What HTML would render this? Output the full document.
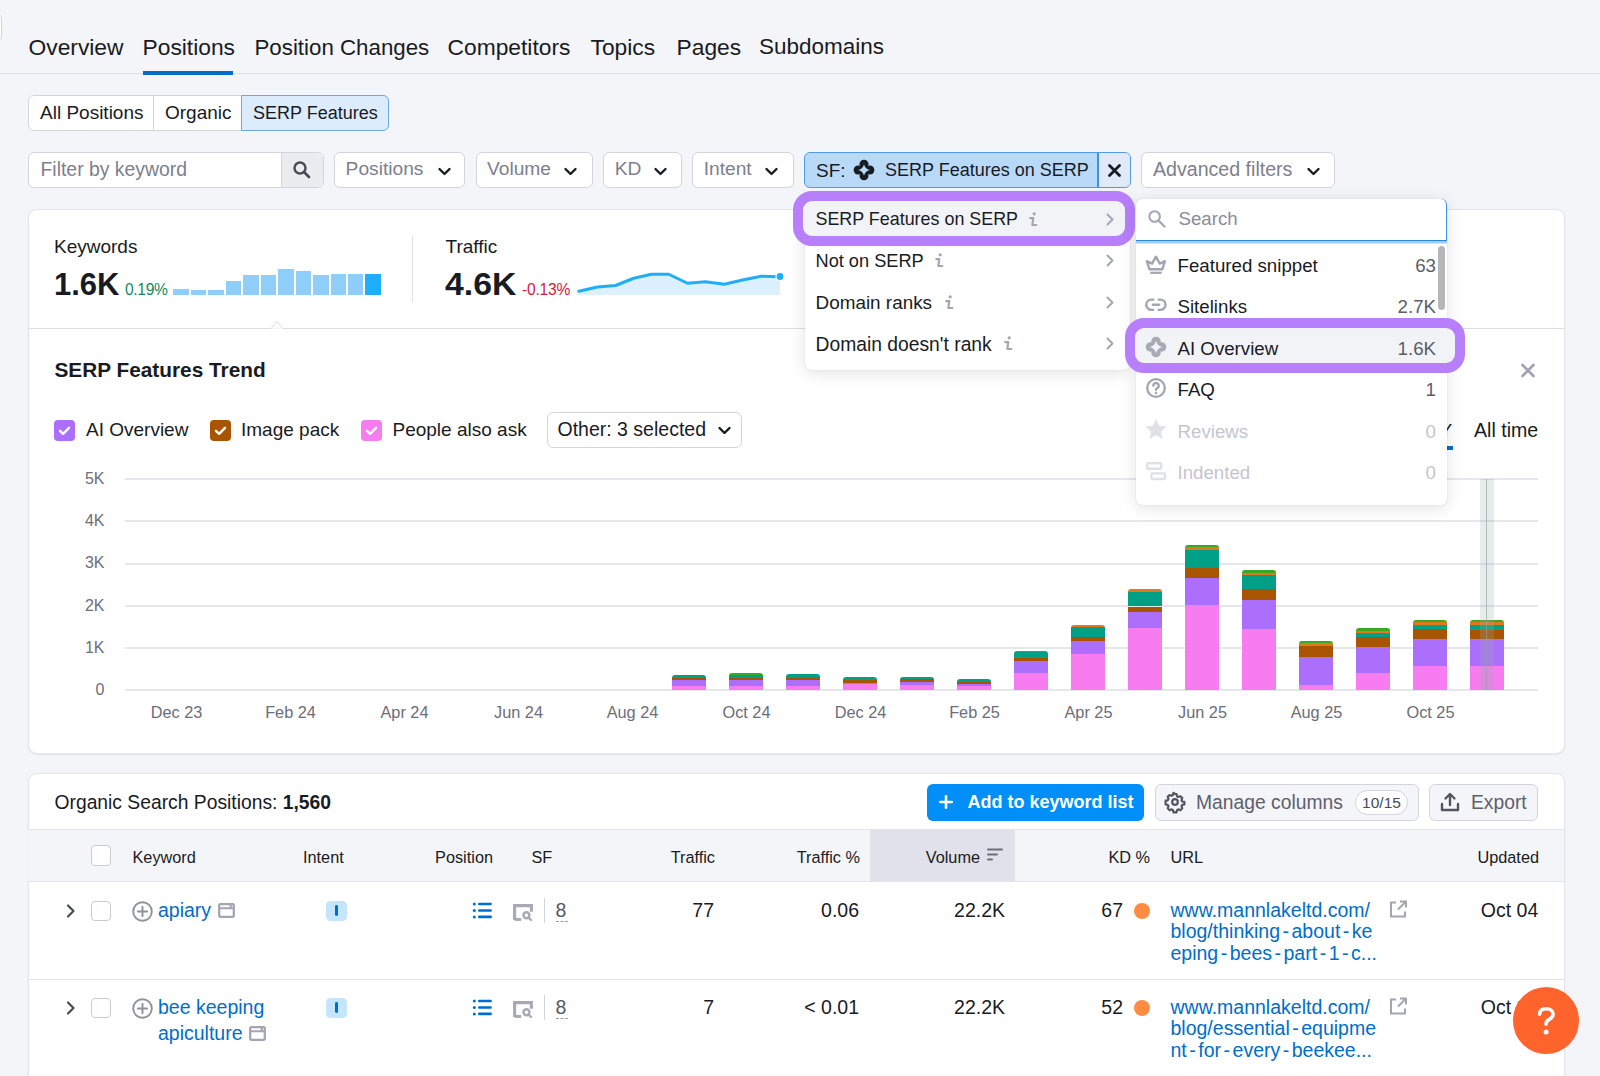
<!DOCTYPE html>
<html><head><meta charset="utf-8">
<style>
*{box-sizing:border-box;margin:0;padding:0}
html,body{width:1600px;height:1076px;overflow:hidden;background:#f4f5f9;font-family:"Liberation Sans",sans-serif;color:#191b23;position:relative}
.a{position:absolute}
.t{position:absolute;white-space:nowrap;line-height:1}
.card{position:absolute;background:#fff;border:1px solid #e3e4ea;border-radius:9px;box-shadow:0 1px 2px rgba(25,27,35,0.07)}
.dd{position:absolute;top:152px;height:36px;background:#fff;border:1px solid #d3d5dd;border-radius:6px}
.ph{color:#7d808c}
svg{position:absolute;overflow:visible}
.kwi{display:inline-block;width:17px;height:15px;border:1.8px solid #a3a5b1;border-radius:2px;vertical-align:-1px;margin-left:2px;position:relative}
.kwi:after{content:"";position:absolute;left:0;right:0;top:4px;border-top:1.8px solid #a3a5b1}
.kwi:before{content:"";position:absolute;left:6.5px;top:4px;width:0;height:8px;border-left:1.8px solid #a3a5b1}
</style></head><body>

<!-- top-left clipped element -->
<div class="a" style="left:-30px;top:13px;width:32px;height:29px;border:1px solid #d3d5dd;border-radius:6px;background:#fff"></div>

<!-- tabs -->
<div class="t" style="left:28.5px;top:36.2px;font-size:22.8px">Overview</div>
<div class="t" style="left:142.5px;top:36.2px;font-size:22.8px">Positions</div>
<div class="t" style="left:254.5px;top:36.6px;font-size:22.3px">Position Changes</div>
<div class="t" style="left:447.5px;top:36.2px;font-size:22.8px">Competitors</div>
<div class="t" style="left:590.5px;top:36.2px;font-size:22.8px">Topics</div>
<div class="t" style="left:676.5px;top:36.2px;font-size:22.8px">Pages</div>
<div class="t" style="left:759px;top:36.4px;font-size:22.5px">Subdomains</div>
<div class="a" style="left:0;top:73px;width:1600px;height:1px;background:#dcdee5"></div>
<div class="a" style="left:143px;top:71px;width:90px;height:4px;background:#006dca"></div>

<!-- segmented control -->
<div class="a" style="left:28px;top:95.3px;width:361px;height:35.4px;border:1px solid #d3d5dd;border-radius:6px;background:#fff"></div>
<div class="a" style="left:153px;top:96px;width:1px;height:34px;background:#d3d5dd"></div>
<div class="a" style="left:241px;top:95.3px;width:148px;height:35.4px;border:1px solid #6aa9e6;border-radius:0 6px 6px 0;background:#dcecfd"></div>
<div class="t" style="left:40px;top:103px;font-size:19px">All Positions</div>
<div class="t" style="left:165px;top:103px;font-size:19px">Organic</div>
<div class="t" style="left:253px;top:104px;font-size:18px">SERP Features</div>

<!-- filter row -->
<div class="dd" style="left:28px;width:296px"></div>
<div class="a" style="left:281px;top:153px;width:42px;height:34px;background:#ebecf0;border-left:1px solid #d3d5dd;border-radius:0 5px 5px 0"></div>
<svg style="left:292px;top:160px" width="20" height="20" viewBox="0 0 20 20"><circle cx="8" cy="8" r="5.5" fill="none" stroke="#484a54" stroke-width="2.4"/><path d="M12 12l5 5" stroke="#484a54" stroke-width="2.6" stroke-linecap="round"/></svg>
<div class="t ph" style="left:40.5px;top:160px;font-size:19.4px">Filter by keyword</div>

<div class="dd" style="left:334px;width:131px"></div>
<div class="t ph" style="left:345.6px;top:159px;font-size:19.2px">Positions</div>
<div class="dd" style="left:475.6px;width:117px"></div>
<div class="t ph" style="left:487px;top:159px;font-size:19.2px">Volume</div>
<div class="dd" style="left:603.4px;width:78.5px"></div>
<div class="t ph" style="left:614.7px;top:159px;font-size:19.2px">KD</div>
<div class="dd" style="left:692px;width:102px"></div>
<div class="t ph" style="left:703.7px;top:159px;font-size:19.2px">Intent</div>
<div class="dd" style="left:1141px;width:193.5px"></div>
<div class="t ph" style="left:1153px;top:159.5px;font-size:19.6px">Advanced filters</div>

<svg style="left:438px;top:167px" width="13" height="9" viewBox="0 0 13 9"><path d="M1.5 2l5 5 5-5" fill="none" stroke="#191b23" stroke-width="2.4" stroke-linecap="round" stroke-linejoin="round"/></svg>
<svg style="left:564px;top:167px" width="13" height="9" viewBox="0 0 13 9"><path d="M1.5 2l5 5 5-5" fill="none" stroke="#191b23" stroke-width="2.4" stroke-linecap="round" stroke-linejoin="round"/></svg>
<svg style="left:654px;top:167px" width="13" height="9" viewBox="0 0 13 9"><path d="M1.5 2l5 5 5-5" fill="none" stroke="#191b23" stroke-width="2.4" stroke-linecap="round" stroke-linejoin="round"/></svg>
<svg style="left:765px;top:167px" width="13" height="9" viewBox="0 0 13 9"><path d="M1.5 2l5 5 5-5" fill="none" stroke="#191b23" stroke-width="2.4" stroke-linecap="round" stroke-linejoin="round"/></svg>
<svg style="left:1307px;top:167px" width="13" height="9" viewBox="0 0 13 9"><path d="M1.5 2l5 5 5-5" fill="none" stroke="#191b23" stroke-width="2.4" stroke-linecap="round" stroke-linejoin="round"/></svg>


<!-- SF chip -->
<div class="a" style="left:804px;top:152px;width:327px;height:36px;border:1px solid #4f9de6;border-radius:6px;background:#b9d9f8;overflow:hidden">
  <div class="a" style="left:292px;top:0;width:34px;height:34px;background:#dfe9f8;border-left:2px solid #3f91e3"></div>
</div>
<div class="t" style="left:816px;top:160.5px;font-size:19px">SF:</div>
<svg style="left:853.6px;top:160px" width="20" height="20" viewBox="0 0 20 20"><circle cx="10.00" cy="4.15" r="4.5" fill="#191b23"/><circle cx="15.85" cy="10.00" r="4.5" fill="#191b23"/><circle cx="10.00" cy="15.85" r="4.5" fill="#191b23"/><circle cx="4.15" cy="10.00" r="4.5" fill="#191b23"/><path d="M10 4.2 Q11.0 9.0 15.8 10 Q11.0 11.0 10 15.8 Q9.0 11.0 4.2 10 Q9.0 9.0 10 4.2Z" fill="#b9d9f8"/></svg>
<div class="t" style="left:885px;top:160.5px;font-size:18px">SERP Features on SERP</div>
<svg style="left:1107.5px;top:163.5px" width="13" height="13" viewBox="0 0 13 13"><path d="M1.5 1.5l10 10M11.5 1.5l-10 10" stroke="#191b23" stroke-width="2.8" stroke-linecap="round"/></svg>
<!-- CARD1 -->
<div class="card" style="left:27.5px;top:208.5px;width:1537px;height:545px"></div>


<div class="t" style="left:54px;top:237px;font-size:19px">Keywords</div>
<div class="t" style="left:54px;top:268.5px;font-size:31px;font-weight:700">1.6K</div>
<div class="t" style="left:125px;top:282px;font-size:15.6px;letter-spacing:-0.35px;color:#0e8a63">0.19%</div>
<div class="a" style="left:173.4px;top:288.7px;width:15.6px;height:6.5px;background:#8fcefb"></div>
<div class="a" style="left:190.8px;top:289.6px;width:15.6px;height:5.6px;background:#8fcefb"></div>
<div class="a" style="left:208.3px;top:289.6px;width:15.6px;height:5.6px;background:#8fcefb"></div>
<div class="a" style="left:225.9px;top:280.6px;width:15.6px;height:14.6px;background:#8fcefb"></div>
<div class="a" style="left:243.2px;top:275.2px;width:15.6px;height:20.0px;background:#8fcefb"></div>
<div class="a" style="left:260.7px;top:274.5px;width:15.6px;height:20.7px;background:#8fcefb"></div>
<div class="a" style="left:278.0px;top:269.3px;width:15.6px;height:25.9px;background:#8fcefb"></div>
<div class="a" style="left:295.6px;top:270.7px;width:15.6px;height:24.5px;background:#8fcefb"></div>
<div class="a" style="left:313.0px;top:274.5px;width:15.6px;height:20.7px;background:#8fcefb"></div>
<div class="a" style="left:330.5px;top:273.6px;width:15.6px;height:21.6px;background:#8fcefb"></div>
<div class="a" style="left:347.8px;top:273.6px;width:15.6px;height:21.6px;background:#8fcefb"></div>
<div class="a" style="left:365.4px;top:273.6px;width:15.6px;height:21.6px;background:#1eaefb"></div>

<div class="a" style="left:412px;top:235px;width:1px;height:67px;background:#e0e1e9"></div>
<div class="t" style="left:445.5px;top:237px;font-size:19px">Traffic</div>
<div class="t" style="left:445px;top:268.5px;font-size:31px;font-weight:700;transform:scaleX(1.09);transform-origin:0 0">4.6K</div>
<div class="t" style="left:522px;top:282px;font-size:15.6px;letter-spacing:-0.2px;color:#d6173b">-0.13%</div>
<svg style="left:0;top:0" width="1600" height="400"><path d="M578.75,295 L578.75,291.25 L597.50,287.00 L615.50,285.50 L633.75,278.25 L651.25,274.25 L668.75,274.25 L687.50,283.25 L705.50,281.75 L724.25,284.25 L742.50,280.00 L761.25,276.25 L780.00,276.75 L780,295 Z" fill="#ddf0fd"/><polyline points="578.75,291.25 597.50,287.00 615.50,285.50 633.75,278.25 651.25,274.25 668.75,274.25 687.50,283.25 705.50,281.75 724.25,284.25 742.50,280.00 761.25,276.25 780.00,276.75" fill="none" stroke="#1eaefb" stroke-width="3" stroke-linejoin="round" stroke-linecap="round"/><circle cx="780" cy="276.5" r="4" fill="#1eaefb" stroke="#fff" stroke-width="1.2"/></svg>
<div class="a" style="left:28px;top:328px;width:1536px;height:1px;background:#dcdee5"></div>
<svg style="left:268px;top:318px" width="20" height="12" viewBox="0 0 20 12"><path d="M0 10.5 L3 10.5 L9 3.5 L15 10.5 L20 10.5" fill="#fff" stroke="#dcdee5" stroke-width="1"/><rect x="3.5" y="10.6" width="11" height="2" fill="#fff"/></svg>


<div class="t" style="left:54.5px;top:360px;font-size:20.8px;font-weight:700">SERP Features Trend</div>
<svg style="left:1521px;top:364px" width="14" height="13" viewBox="0 0 14 13"><path d="M1.5 1l11 11M12.5 1l-11 11" stroke="#a3a5b1" stroke-width="2.8" stroke-linecap="round"/></svg>
<div class="a" style="left:54px;top:420px"><svg width="21" height="21" viewBox="0 0 21 21" style="position:static;display:block"><rect width="21" height="21" rx="4" fill="#ab6ffc"/><path d="M6 10.8l3.1 3 5.9-6" fill="none" stroke="#fff" stroke-width="2.4" stroke-linecap="round" stroke-linejoin="round"/></svg></div>
<div class="t" style="left:86px;top:419.5px;font-size:19px">AI Overview</div>
<div class="a" style="left:210px;top:420px"><svg width="21" height="21" viewBox="0 0 21 21" style="position:static;display:block"><rect width="21" height="21" rx="4" fill="#a95400"/><path d="M6 10.8l3.1 3 5.9-6" fill="none" stroke="#fff" stroke-width="2.4" stroke-linecap="round" stroke-linejoin="round"/></svg></div>
<div class="t" style="left:241px;top:419.5px;font-size:19px">Image pack</div>
<div class="a" style="left:360.6px;top:420px"><svg width="21" height="21" viewBox="0 0 21 21" style="position:static;display:block"><rect width="21" height="21" rx="4" fill="#f67cf0"/><path d="M6 10.8l3.1 3 5.9-6" fill="none" stroke="#fff" stroke-width="2.4" stroke-linecap="round" stroke-linejoin="round"/></svg></div>
<div class="t" style="left:392.5px;top:419.5px;font-size:19px">People also ask</div>
<div class="a" style="left:546.8px;top:412.3px;width:195.5px;height:35.3px;border:1px solid #d3d5dd;border-radius:6px;background:#fff"></div>
<div class="t" style="left:557.5px;top:420px;font-size:19.5px">Other: 3 selected</div>
<svg style="left:717.5px;top:425.5px" width="13" height="9" viewBox="0 0 13 9"><path d="M1.5 2l5 5 5-5" fill="none" stroke="#191b23" stroke-width="2.4" stroke-linecap="round" stroke-linejoin="round"/></svg>
<div class="t" style="left:1474px;top:420.5px;font-size:19.6px">All time</div>
<div class="t" style="left:1429px;top:420.5px;font-size:19px">1Y</div>
<div class="a" style="left:1420px;top:446px;width:33px;height:3.5px;background:#006dca"></div>
<div class="a" style="left:125px;top:478px;width:1413px;height:1.6px;background:#e6e7ed"></div>
<div class="a" style="left:125px;top:520px;width:1413px;height:1.6px;background:#e6e7ed"></div>
<div class="a" style="left:125px;top:563px;width:1413px;height:1.6px;background:#e6e7ed"></div>
<div class="a" style="left:125px;top:605px;width:1413px;height:1.6px;background:#e6e7ed"></div>
<div class="a" style="left:125px;top:647px;width:1413px;height:1.6px;background:#e6e7ed"></div>
<div class="a" style="left:125px;top:689px;width:1413px;height:1.6px;background:#e6e7ed"></div>
<div class="t" style="left:0;width:104.5px;text-align:right;top:470.7px;font-size:16px;color:#6c6e79">5K</div>
<div class="t" style="left:0;width:104.5px;text-align:right;top:512.9px;font-size:16px;color:#6c6e79">4K</div>
<div class="t" style="left:0;width:104.5px;text-align:right;top:555.3px;font-size:16px;color:#6c6e79">3K</div>
<div class="t" style="left:0;width:104.5px;text-align:right;top:597.5px;font-size:16px;color:#6c6e79">2K</div>
<div class="t" style="left:0;width:104.5px;text-align:right;top:639.7px;font-size:16px;color:#6c6e79">1K</div>
<div class="t" style="left:0;width:104.5px;text-align:right;top:681.7px;font-size:16px;color:#6c6e79">0</div>
<div class="t" style="left:126.5px;width:100px;text-align:center;top:704.2px;font-size:16.3px;color:#6c6e79">Dec 23</div>
<div class="t" style="left:240.5px;width:100px;text-align:center;top:704.2px;font-size:16.3px;color:#6c6e79">Feb 24</div>
<div class="t" style="left:354.5px;width:100px;text-align:center;top:704.2px;font-size:16.3px;color:#6c6e79">Apr 24</div>
<div class="t" style="left:468.5px;width:100px;text-align:center;top:704.2px;font-size:16.3px;color:#6c6e79">Jun 24</div>
<div class="t" style="left:582.5px;width:100px;text-align:center;top:704.2px;font-size:16.3px;color:#6c6e79">Aug 24</div>
<div class="t" style="left:696.5px;width:100px;text-align:center;top:704.2px;font-size:16.3px;color:#6c6e79">Oct 24</div>
<div class="t" style="left:810.5px;width:100px;text-align:center;top:704.2px;font-size:16.3px;color:#6c6e79">Dec 24</div>
<div class="t" style="left:924.5px;width:100px;text-align:center;top:704.2px;font-size:16.3px;color:#6c6e79">Feb 25</div>
<div class="t" style="left:1038.5px;width:100px;text-align:center;top:704.2px;font-size:16.3px;color:#6c6e79">Apr 25</div>
<div class="t" style="left:1152.5px;width:100px;text-align:center;top:704.2px;font-size:16.3px;color:#6c6e79">Jun 25</div>
<div class="t" style="left:1266.5px;width:100px;text-align:center;top:704.2px;font-size:16.3px;color:#6c6e79">Aug 25</div>
<div class="t" style="left:1380.5px;width:100px;text-align:center;top:704.2px;font-size:16.3px;color:#6c6e79">Oct 25</div>
<div class="a" style="left:672px;top:675.3px;width:34px;height:14.7px;border-radius:3px 3px 0 0;overflow:hidden"><div class="a" style="left:0;top:0.0px;width:100%;height:3.2px;background:#00a086"></div><div class="a" style="left:0;top:3.2px;width:100%;height:2.0px;background:#a95400"></div><div class="a" style="left:0;top:5.2px;width:100%;height:5.5px;background:#ab6ffc"></div><div class="a" style="left:0;top:10.7px;width:100%;height:4.0px;background:#f67cf0"></div></div>
<div class="a" style="left:729px;top:672.5px;width:34px;height:17.5px;border-radius:3px 3px 0 0;overflow:hidden"><div class="a" style="left:0;top:0.0px;width:100%;height:2.5px;background:#3aa821"></div><div class="a" style="left:0;top:2.5px;width:100%;height:2.7px;background:#00a086"></div><div class="a" style="left:0;top:5.2px;width:100%;height:2.3px;background:#a95400"></div><div class="a" style="left:0;top:7.5px;width:100%;height:6.0px;background:#ab6ffc"></div><div class="a" style="left:0;top:13.5px;width:100%;height:4.0px;background:#f67cf0"></div></div>
<div class="a" style="left:786px;top:674.0px;width:34px;height:16.0px;border-radius:3px 3px 0 0;overflow:hidden"><div class="a" style="left:0;top:0.0px;width:100%;height:3.5px;background:#00a086"></div><div class="a" style="left:0;top:3.5px;width:100%;height:2.5px;background:#a95400"></div><div class="a" style="left:0;top:6.0px;width:100%;height:5.5px;background:#ab6ffc"></div><div class="a" style="left:0;top:11.5px;width:100%;height:4.5px;background:#f67cf0"></div></div>
<div class="a" style="left:843px;top:677.4px;width:34px;height:12.6px;border-radius:3px 3px 0 0;overflow:hidden"><div class="a" style="left:0;top:0.0px;width:100%;height:2.6px;background:#00a086"></div><div class="a" style="left:0;top:2.6px;width:100%;height:3.0px;background:#a95400"></div><div class="a" style="left:0;top:5.6px;width:100%;height:1.5px;background:#ab6ffc"></div><div class="a" style="left:0;top:7.1px;width:100%;height:5.5px;background:#f67cf0"></div></div>
<div class="a" style="left:900px;top:676.8px;width:34px;height:13.2px;border-radius:3px 3px 0 0;overflow:hidden"><div class="a" style="left:0;top:0.0px;width:100%;height:2.7px;background:#00a086"></div><div class="a" style="left:0;top:2.7px;width:100%;height:3.0px;background:#a95400"></div><div class="a" style="left:0;top:5.7px;width:100%;height:2.5px;background:#ab6ffc"></div><div class="a" style="left:0;top:8.2px;width:100%;height:5.0px;background:#f67cf0"></div></div>
<div class="a" style="left:957px;top:678.5px;width:34px;height:11.5px;border-radius:3px 3px 0 0;overflow:hidden"><div class="a" style="left:0;top:0.0px;width:100%;height:3.0px;background:#00a086"></div><div class="a" style="left:0;top:3.0px;width:100%;height:2.5px;background:#a95400"></div><div class="a" style="left:0;top:5.5px;width:100%;height:2.0px;background:#ab6ffc"></div><div class="a" style="left:0;top:7.5px;width:100%;height:4.0px;background:#f67cf0"></div></div>
<div class="a" style="left:1014px;top:650.6px;width:34px;height:39.4px;border-radius:3px 3px 0 0;overflow:hidden"><div class="a" style="left:0;top:0.0px;width:100%;height:1.9px;background:#3aa821"></div><div class="a" style="left:0;top:1.9px;width:100%;height:5.2px;background:#00a086"></div><div class="a" style="left:0;top:7.1px;width:100%;height:3.8px;background:#a95400"></div><div class="a" style="left:0;top:10.9px;width:100%;height:11.5px;background:#ab6ffc"></div><div class="a" style="left:0;top:22.4px;width:100%;height:17.0px;background:#f67cf0"></div></div>
<div class="a" style="left:1071px;top:624.5px;width:34px;height:65.5px;border-radius:3px 3px 0 0;overflow:hidden"><div class="a" style="left:0;top:0.0px;width:100%;height:2.5px;background:#e1791c"></div><div class="a" style="left:0;top:2.5px;width:100%;height:10.0px;background:#00a086"></div><div class="a" style="left:0;top:12.5px;width:100%;height:4.4px;background:#a95400"></div><div class="a" style="left:0;top:16.9px;width:100%;height:12.6px;background:#ab6ffc"></div><div class="a" style="left:0;top:29.5px;width:100%;height:36.0px;background:#f67cf0"></div></div>
<div class="a" style="left:1128px;top:589.0px;width:34px;height:101.0px;border-radius:3px 3px 0 0;overflow:hidden"><div class="a" style="left:0;top:0.0px;width:100%;height:2.6px;background:#e1791c"></div><div class="a" style="left:0;top:2.6px;width:100%;height:14.9px;background:#00a086"></div><div class="a" style="left:0;top:17.5px;width:100%;height:5.2px;background:#a95400"></div><div class="a" style="left:0;top:22.7px;width:100%;height:16.3px;background:#ab6ffc"></div><div class="a" style="left:0;top:39.0px;width:100%;height:62.0px;background:#f67cf0"></div></div>
<div class="a" style="left:1185px;top:545.0px;width:34px;height:145.0px;border-radius:3px 3px 0 0;overflow:hidden"><div class="a" style="left:0;top:0.0px;width:100%;height:2.0px;background:#3aa821"></div><div class="a" style="left:0;top:2.0px;width:100%;height:3.0px;background:#e1791c"></div><div class="a" style="left:0;top:5.0px;width:100%;height:18.0px;background:#00a086"></div><div class="a" style="left:0;top:23.0px;width:100%;height:10.0px;background:#a95400"></div><div class="a" style="left:0;top:33.0px;width:100%;height:27.0px;background:#ab6ffc"></div><div class="a" style="left:0;top:60.0px;width:100%;height:85.0px;background:#f67cf0"></div></div>
<div class="a" style="left:1242px;top:570.0px;width:34px;height:120.0px;border-radius:3px 3px 0 0;overflow:hidden"><div class="a" style="left:0;top:0.0px;width:100%;height:2.5px;background:#3aa821"></div><div class="a" style="left:0;top:2.5px;width:100%;height:2.5px;background:#e1791c"></div><div class="a" style="left:0;top:5.0px;width:100%;height:13.5px;background:#00a086"></div><div class="a" style="left:0;top:18.5px;width:100%;height:11.7px;background:#a95400"></div><div class="a" style="left:0;top:30.2px;width:100%;height:29.0px;background:#ab6ffc"></div><div class="a" style="left:0;top:59.2px;width:100%;height:60.8px;background:#f67cf0"></div></div>
<div class="a" style="left:1299px;top:641.2px;width:34px;height:48.8px;border-radius:3px 3px 0 0;overflow:hidden"><div class="a" style="left:0;top:0.0px;width:100%;height:2.3px;background:#3aa821"></div><div class="a" style="left:0;top:2.3px;width:100%;height:3.0px;background:#e1791c"></div><div class="a" style="left:0;top:5.3px;width:100%;height:11.0px;background:#a95400"></div><div class="a" style="left:0;top:16.3px;width:100%;height:28.0px;background:#ab6ffc"></div><div class="a" style="left:0;top:44.3px;width:100%;height:4.5px;background:#f67cf0"></div></div>
<div class="a" style="left:1356px;top:628.0px;width:34px;height:62.0px;border-radius:3px 3px 0 0;overflow:hidden"><div class="a" style="left:0;top:0.0px;width:100%;height:2.5px;background:#3aa821"></div><div class="a" style="left:0;top:2.5px;width:100%;height:2.5px;background:#e1791c"></div><div class="a" style="left:0;top:5.0px;width:100%;height:3.5px;background:#00a086"></div><div class="a" style="left:0;top:8.5px;width:100%;height:10.5px;background:#a95400"></div><div class="a" style="left:0;top:19.0px;width:100%;height:25.7px;background:#ab6ffc"></div><div class="a" style="left:0;top:44.7px;width:100%;height:17.3px;background:#f67cf0"></div></div>
<div class="a" style="left:1413px;top:619.8px;width:34px;height:70.2px;border-radius:3px 3px 0 0;overflow:hidden"><div class="a" style="left:0;top:0.0px;width:100%;height:2.2px;background:#3aa821"></div><div class="a" style="left:0;top:2.2px;width:100%;height:3.0px;background:#e1791c"></div><div class="a" style="left:0;top:5.2px;width:100%;height:4.5px;background:#00a086"></div><div class="a" style="left:0;top:9.7px;width:100%;height:9.5px;background:#a95400"></div><div class="a" style="left:0;top:19.2px;width:100%;height:27.0px;background:#ab6ffc"></div><div class="a" style="left:0;top:46.2px;width:100%;height:24.0px;background:#f67cf0"></div></div>
<div class="a" style="left:1470px;top:619.5px;width:34px;height:70.5px;border-radius:3px 3px 0 0;overflow:hidden"><div class="a" style="left:0;top:0.0px;width:100%;height:2.5px;background:#3aa821"></div><div class="a" style="left:0;top:2.5px;width:100%;height:3.0px;background:#e1791c"></div><div class="a" style="left:0;top:5.5px;width:100%;height:4.5px;background:#00a086"></div><div class="a" style="left:0;top:10.0px;width:100%;height:9.0px;background:#a95400"></div><div class="a" style="left:0;top:19.0px;width:100%;height:27.5px;background:#ab6ffc"></div><div class="a" style="left:0;top:46.5px;width:100%;height:24.0px;background:#f67cf0"></div></div>

<div class="a" style="left:1480px;top:479px;width:14px;height:211px;background:rgba(150,170,170,0.24)"></div>
<div class="a" style="left:1485.5px;top:479px;width:1.6px;height:211px;background:rgba(150,160,162,0.65)"></div>

<!-- CARD2 -->
<div class="card" style="left:27.5px;top:773px;width:1537px;height:400px"></div>


<div class="t" style="left:54.5px;top:792.5px;font-size:19.3px">Organic Search Positions: <b>1,560</b></div>
<div class="a" style="left:926.5px;top:783.5px;width:217px;height:37px;background:#008ff8;border-radius:6px"></div>
<svg style="left:939px;top:795px" width="14" height="14" viewBox="0 0 14 14"><path d="M7 1.2v11.6M1.2 7h11.6" stroke="#fff" stroke-width="2.6" stroke-linecap="round"/></svg>
<div class="t" style="left:967.5px;top:792.7px;font-size:18px;font-weight:700;color:#fff">Add to keyword list</div>
<div class="a" style="left:1155px;top:783.5px;width:264px;height:37px;background:#f4f5f9;border:1px solid #d3d5dd;border-radius:6px"></div>
<svg style="left:1165px;top:792px" width="20" height="20" viewBox="0 0 20 20"><path d="M10 1.8l1.6.3.4 2.2 1.3.7 2.1-.8 1.9 1.9-.8 2.1.7 1.3 2.2.4v2.6l-2.2.4-.7 1.3.8 2.1-1.9 1.9-2.1-.8-1.3.7-.4 2.2H8.4l-.4-2.2-1.3-.7-2.1.8-1.9-1.9.8-2.1-.7-1.3-2.2-.4V8.7l2.2-.4.7-1.3-.8-2.1 1.9-1.9 2.1.8 1.3-.7.4-2.2z" fill="none" stroke="#53555f" stroke-width="2.2" stroke-linejoin="round"/><circle cx="10" cy="10" r="2.8" fill="none" stroke="#53555f" stroke-width="2.2"/></svg>
<div class="t" style="left:1196px;top:792.7px;font-size:19.3px;color:#5e606b">Manage columns</div>
<div class="a" style="left:1355px;top:789.5px;width:53px;height:25.5px;background:#fff;border:1px solid #d3d5dd;border-radius:13px"></div>
<div class="t" style="left:1355px;width:53px;text-align:center;top:795px;font-size:15.5px;color:#484a54">10/15</div>
<div class="a" style="left:1429px;top:783.5px;width:109px;height:37px;background:#f4f5f9;border:1px solid #d3d5dd;border-radius:6px"></div>
<svg style="left:1440px;top:792px" width="20" height="20" viewBox="0 0 20 20"><path d="M10 13V2.5M5.5 6.5L10 2l4.5 4.5M2 12v6h16v-6" fill="none" stroke="#53555f" stroke-width="2.4" stroke-linecap="round" stroke-linejoin="round"/></svg>
<div class="t" style="left:1471px;top:792.7px;font-size:19.3px;color:#5e606b">Export</div>

<div class="a" style="left:28px;top:829px;width:1536px;height:53px;background:#f4f5f9;border-top:1px solid #e3e4ea;border-bottom:1px solid #e3e4ea"></div>
<div class="a" style="left:870px;top:830px;width:145px;height:51px;background:#e0e1ea"></div>
<div class="a" style="left:90.5px;top:845px;width:20.5px;height:20.5px;background:#fff;border:1px solid #c9cbd3;border-radius:4px"></div>
<div class="t" style="left:132.5px;top:848.5px;font-size:16.3px">Keyword</div>
<div class="t" style="left:303px;top:848.5px;font-size:16.3px">Intent</div>
<div class="t" style="left:393px;width:100px;text-align:right;top:848.5px;font-size:16.3px">Position</div>
<div class="t" style="left:531.5px;top:848.5px;font-size:16.3px">SF</div>
<div class="t" style="left:615px;width:100px;text-align:right;top:848.5px;font-size:16.3px">Traffic</div>
<div class="t" style="left:760px;width:100px;text-align:right;top:848.5px;font-size:16.3px">Traffic %</div>
<div class="t" style="left:880px;width:100px;text-align:right;top:848.5px;font-size:16.3px">Volume</div>
<svg style="left:987px;top:848px" width="16" height="14" viewBox="0 0 16 14"><path d="M1 1.5h14M1 6.5h9M1 11.5h4" stroke="#6c6e79" stroke-width="2" stroke-linecap="round"/></svg>
<div class="t" style="left:1050px;width:100px;text-align:right;top:848.5px;font-size:16.3px">KD %</div>
<div class="t" style="left:1170.5px;top:848.5px;font-size:16.3px">URL</div>
<div class="t" style="left:1439px;width:100px;text-align:right;top:848.5px;font-size:16.3px">Updated</div>
<svg style="left:66px;top:903.5px" width="10" height="14" viewBox="0 0 10 14"><path d="M2 1.5l5.5 5.5L2 12.5" fill="none" stroke="#484a54" stroke-width="2.2" stroke-linecap="round" stroke-linejoin="round"/></svg><div class="a" style="left:90.5px;top:900.5px;width:20.5px;height:20.5px;background:#fff;border:1px solid #c9cbd3;border-radius:4px"></div><svg style="left:131.5px;top:900.5px" width="21" height="21" viewBox="0 0 21 21"><circle cx="10.5" cy="10.5" r="9.3" fill="none" stroke="#8f919b" stroke-width="1.9"/><path d="M10.5 5.8v9.4M5.8 10.5h9.4" stroke="#8f919b" stroke-width="1.9" stroke-linecap="round"/></svg><div class="t" style="left:158px;top:901.0px;font-size:19.5px;color:#006dca">apiary <svg style="position:relative;vertical-align:-1px;margin-left:1px" width="17" height="15" viewBox="0 0 17 15"><rect x="1.2" y="1.2" width="14.6" height="12.6" fill="none" stroke="#a3a5b1" stroke-width="2.3" rx="1"/><path d="M1.2 5.3h14.6M12.7 1.2v4" stroke="#a3a5b1" stroke-width="2.1"/></svg></div><div class="a" style="left:326.3px;top:900.5px;width:20.7px;height:20.8px;background:#c5e5fc;border-radius:4.5px"></div><div class="a" style="left:335.3px;top:904.6px;width:2.8px;height:11.3px;border-radius:1.4px;background:#006dca"></div><svg style="left:472px;top:902.0px" width="20" height="17" viewBox="0 0 20 17"><circle cx="2.3" cy="2" r="1.5" fill="#006dca"/><circle cx="2.3" cy="8.5" r="1.5" fill="#006dca"/><circle cx="2.3" cy="14.9" r="1.5" fill="#006dca"/><path d="M7.3 2h11.3M7.3 8.5h11.3M7.3 14.9h11.3" stroke="#006dca" stroke-width="2.6" stroke-linecap="round"/></svg><svg style="left:512.5px;top:904.2px" width="20" height="17" viewBox="0 0 20 17"><path d="M1.6 16V1.6h16.8v6.2" fill="none" stroke="#a7a9b4" stroke-width="3.1"/><path d="M1.6 15.4h6.6" stroke="#a7a9b4" stroke-width="3"/><circle cx="13.4" cy="11.3" r="3" fill="none" stroke="#a7a9b4" stroke-width="2.4"/><path d="M15.6 13.6l2.4 2.4" stroke="#a7a9b4" stroke-width="2.4" stroke-linecap="round"/></svg><div class="a" style="left:544px;top:898.0px;width:1.3px;height:25px;background:#d3d5dd"></div><div class="t" style="left:555.5px;top:900.5px;font-size:19.5px;color:#555761">8</div><div class="a" style="left:556px;top:921.0px;width:11.5px;height:0;border-top:1px dashed #9a9ca7"></div><div class="t" style="left:614px;width:100px;text-align:right;top:900.5px;font-size:19.5px">77</div><div class="t" style="left:759px;width:100px;text-align:right;top:900.5px;font-size:19.5px">0.06</div><div class="t" style="left:905px;width:100px;text-align:right;top:900.5px;font-size:19.5px">22.2K</div><div class="t" style="left:1023px;width:100px;text-align:right;top:900.5px;font-size:19.5px">67</div><div class="a" style="left:1134px;top:903.0px;width:16px;height:16px;border-radius:50%;background:#ff8c43"></div><div class="t" style="left:1170.5px;top:900.5px;font-size:19.5px;color:#006dca">www.mannlakeltd.com/</div><div class="t" style="left:1170.5px;top:922.0px;font-size:19.5px;color:#006dca">blog/thinking<span style="margin:0 2.5px">-</span>about<span style="margin:0 2.5px">-</span>ke</div><div class="t" style="left:1170.5px;top:943.5px;font-size:19.5px;color:#006dca">eping<span style="margin:0 2.5px">-</span>bees<span style="margin:0 2.5px">-</span>part<span style="margin:0 2.5px">-</span>1<span style="margin:0 2.5px">-</span>c...</div><svg style="left:1389px;top:900.0px" width="19" height="18" viewBox="0 0 19 18"><path d="M7 2.5H2v14h14v-5" fill="none" stroke="#a3a5b1" stroke-width="2"/><path d="M9 9.5L17 1.5M11 1.5h6v6" fill="none" stroke="#a3a5b1" stroke-width="2"/></svg><div class="t" style="left:1438.3px;width:100px;text-align:right;top:900.5px;font-size:19.5px">Oct 04</div><div class="a" style="left:28px;top:978.5px;width:1536px;height:1.3px;background:#e3e4ea"></div>
<svg style="left:66px;top:1000.5px" width="10" height="14" viewBox="0 0 10 14"><path d="M2 1.5l5.5 5.5L2 12.5" fill="none" stroke="#484a54" stroke-width="2.2" stroke-linecap="round" stroke-linejoin="round"/></svg><div class="a" style="left:90.5px;top:997.5px;width:20.5px;height:20.5px;background:#fff;border:1px solid #c9cbd3;border-radius:4px"></div><svg style="left:131.5px;top:997.5px" width="21" height="21" viewBox="0 0 21 21"><circle cx="10.5" cy="10.5" r="9.3" fill="none" stroke="#8f919b" stroke-width="1.9"/><path d="M10.5 5.8v9.4M5.8 10.5h9.4" stroke="#8f919b" stroke-width="1.9" stroke-linecap="round"/></svg><div class="t" style="left:158px;top:998.0px;font-size:19.5px;color:#006dca">bee keeping</div><div class="t" style="left:158px;top:1024.0px;font-size:19.5px;color:#006dca">apiculture <svg style="position:relative;vertical-align:-1px;margin-left:1px" width="17" height="15" viewBox="0 0 17 15"><rect x="1.2" y="1.2" width="14.6" height="12.6" fill="none" stroke="#a3a5b1" stroke-width="2.3" rx="1"/><path d="M1.2 5.3h14.6M12.7 1.2v4" stroke="#a3a5b1" stroke-width="2.1"/></svg></div><div class="a" style="left:326.3px;top:997.5px;width:20.7px;height:20.8px;background:#c5e5fc;border-radius:4.5px"></div><div class="a" style="left:335.3px;top:1001.6px;width:2.8px;height:11.3px;border-radius:1.4px;background:#006dca"></div><svg style="left:472px;top:999.0px" width="20" height="17" viewBox="0 0 20 17"><circle cx="2.3" cy="2" r="1.5" fill="#006dca"/><circle cx="2.3" cy="8.5" r="1.5" fill="#006dca"/><circle cx="2.3" cy="14.9" r="1.5" fill="#006dca"/><path d="M7.3 2h11.3M7.3 8.5h11.3M7.3 14.9h11.3" stroke="#006dca" stroke-width="2.6" stroke-linecap="round"/></svg><svg style="left:512.5px;top:1001.2px" width="20" height="17" viewBox="0 0 20 17"><path d="M1.6 16V1.6h16.8v6.2" fill="none" stroke="#a7a9b4" stroke-width="3.1"/><path d="M1.6 15.4h6.6" stroke="#a7a9b4" stroke-width="3"/><circle cx="13.4" cy="11.3" r="3" fill="none" stroke="#a7a9b4" stroke-width="2.4"/><path d="M15.6 13.6l2.4 2.4" stroke="#a7a9b4" stroke-width="2.4" stroke-linecap="round"/></svg><div class="a" style="left:544px;top:995.0px;width:1.3px;height:25px;background:#d3d5dd"></div><div class="t" style="left:555.5px;top:997.5px;font-size:19.5px;color:#555761">8</div><div class="a" style="left:556px;top:1018.0px;width:11.5px;height:0;border-top:1px dashed #9a9ca7"></div><div class="t" style="left:614px;width:100px;text-align:right;top:997.5px;font-size:19.5px">7</div><div class="t" style="left:759px;width:100px;text-align:right;top:997.5px;font-size:19.5px">&lt; 0.01</div><div class="t" style="left:905px;width:100px;text-align:right;top:997.5px;font-size:19.5px">22.2K</div><div class="t" style="left:1023px;width:100px;text-align:right;top:997.5px;font-size:19.5px">52</div><div class="a" style="left:1134px;top:1000.0px;width:16px;height:16px;border-radius:50%;background:#ff8c43"></div><div class="t" style="left:1170.5px;top:997.5px;font-size:19.5px;color:#006dca">www.mannlakeltd.com/</div><div class="t" style="left:1170.5px;top:1019.0px;font-size:19.5px;color:#006dca">blog/essential<span style="margin:0 2.5px">-</span>equipme</div><div class="t" style="left:1170.5px;top:1040.5px;font-size:19.5px;color:#006dca">nt<span style="margin:0 2.5px">-</span>for<span style="margin:0 2.5px">-</span>every<span style="margin:0 2.5px">-</span>beekee...</div><svg style="left:1389px;top:997.0px" width="19" height="18" viewBox="0 0 19 18"><path d="M7 2.5H2v14h14v-5" fill="none" stroke="#a3a5b1" stroke-width="2"/><path d="M9 9.5L17 1.5M11 1.5h6v6" fill="none" stroke="#a3a5b1" stroke-width="2"/></svg><div class="t" style="left:1438.3px;width:100px;text-align:right;top:997.5px;font-size:19.5px">Oct 04</div>

<div class="a" style="left:1512.5px;top:987px;width:66.5px;height:66.5px;border-radius:50%;background:#ff642d"></div>
<svg style="left:0;top:0" width="1600" height="1076"><path d="M1539.6 1014.2C1539.6 1010.3 1542.6 1008.8 1546.3 1008.8C1550.4 1008.8 1553.1 1011.2 1553.1 1014.3C1553.1 1017.4 1550.6 1018.6 1548.8 1019.6C1547 1020.7 1546 1021.8 1546 1024.3" fill="none" stroke="#fff" stroke-width="3.6" stroke-linecap="round"/><circle cx="1546.1" cy="1031.9" r="2.5" fill="#fff"/></svg>


<div class="a" style="left:805px;top:197px;width:325px;height:173px;background:#fff;border-radius:6px;box-shadow:0 0 1px rgba(25,27,35,0.25),0 3px 16px rgba(25,27,35,0.12)"></div>
<div class="a" style="left:793px;top:190.5px;width:342px;height:55.3px;border:10.5px solid #b77ffc;border-radius:19px;background:#f2f3f7"></div>
<div class="t" style="left:815.5px;top:210.8px;font-size:17.9px">SERP Features on SERP</div>
<svg style="left:1029.0px;top:211.5px" width="9" height="14" viewBox="0 0 9 14"><circle cx="5.2" cy="1.8" r="1.6" fill="#a3a5b1"/><path d="M1.2 6.1h3.1l-1 6.9h4" fill="none" stroke="#a3a5b1" stroke-width="2.1" stroke-linecap="round" stroke-linejoin="round"/></svg><svg style="left:1106px;top:212.7px" width="9" height="13" viewBox="0 0 9 13"><path d="M1.5 1.5l5 5-5 5" fill="none" stroke="#a3a5b1" stroke-width="1.9" stroke-linecap="round" stroke-linejoin="round"/></svg>
<div class="t" style="left:815.5px;top:252px;font-size:18.2px">Not on SERP</div>
<svg style="left:934.5px;top:253.0px" width="9" height="14" viewBox="0 0 9 14"><circle cx="5.2" cy="1.8" r="1.6" fill="#a3a5b1"/><path d="M1.2 6.1h3.1l-1 6.9h4" fill="none" stroke="#a3a5b1" stroke-width="2.1" stroke-linecap="round" stroke-linejoin="round"/></svg><svg style="left:1106px;top:254.2px" width="9" height="13" viewBox="0 0 9 13"><path d="M1.5 1.5l5 5-5 5" fill="none" stroke="#a3a5b1" stroke-width="1.9" stroke-linecap="round" stroke-linejoin="round"/></svg>
<div class="t" style="left:815.5px;top:293.5px;font-size:18.9px">Domain ranks</div>
<svg style="left:944.5px;top:294.5px" width="9" height="14" viewBox="0 0 9 14"><circle cx="5.2" cy="1.8" r="1.6" fill="#a3a5b1"/><path d="M1.2 6.1h3.1l-1 6.9h4" fill="none" stroke="#a3a5b1" stroke-width="2.1" stroke-linecap="round" stroke-linejoin="round"/></svg><svg style="left:1106px;top:295.7px" width="9" height="13" viewBox="0 0 9 13"><path d="M1.5 1.5l5 5-5 5" fill="none" stroke="#a3a5b1" stroke-width="1.9" stroke-linecap="round" stroke-linejoin="round"/></svg>
<div class="t" style="left:815.5px;top:335px;font-size:19.3px">Domain doesn't rank</div>
<svg style="left:1003.5px;top:336.0px" width="9" height="14" viewBox="0 0 9 14"><circle cx="5.2" cy="1.8" r="1.6" fill="#a3a5b1"/><path d="M1.2 6.1h3.1l-1 6.9h4" fill="none" stroke="#a3a5b1" stroke-width="2.1" stroke-linecap="round" stroke-linejoin="round"/></svg><svg style="left:1106px;top:337.2px" width="9" height="13" viewBox="0 0 9 13"><path d="M1.5 1.5l5 5-5 5" fill="none" stroke="#a3a5b1" stroke-width="1.9" stroke-linecap="round" stroke-linejoin="round"/></svg>

<div class="a" style="left:1135.5px;top:198.5px;width:311.5px;height:306.5px;background:#fff;border-radius:6px;box-shadow:0 0 1px rgba(25,27,35,0.25),0 3px 16px rgba(25,27,35,0.12)"></div>
<div class="a" style="left:1135.5px;top:198.5px;width:311.5px;height:42.5px;border-right:1px solid #3d93e8;border-bottom:1px solid #2a86e0;border-radius:6px 6px 0 0;box-shadow:0 2.5px 0 0 #9ccffb"></div>
<svg style="left:1147px;top:209px" width="20" height="20" viewBox="0 0 20 20"><circle cx="7.6" cy="7.5" r="5.3" fill="none" stroke="#a3a5b1" stroke-width="2"/><path d="M11.5 11.5l6 6" stroke="#a3a5b1" stroke-width="2.2" stroke-linecap="round"/></svg>
<div class="t" style="left:1178.5px;top:210px;font-size:18.7px;color:#8a8d99">Search</div>
<div class="a" style="left:1438px;top:246px;width:7px;height:64px;background:#b7b7b9;border-radius:4px"></div>

<div class="a" style="left:1124.5px;top:318px;width:340px;height:55px;border:10.5px solid #b77ffc;border-radius:19px;background:#f2f3f7"></div>

<svg style="left:1138px;top:248px" width="40" height="30" viewBox="0 0 40 30"><path d="M8.9 13.2L14 15.6 17.9 8.7 21.8 15.6 26.9 13.2 24.3 21.3H11.5Z" fill="none" stroke="#a3a5b1" stroke-width="2.4" stroke-linejoin="round"/><path d="M12.2 24.8h11.4" stroke="#a3a5b1" stroke-width="2.2"/></svg>
<div class="t" style="left:1177.5px;top:256.5px;font-size:18.7px">Featured snippet</div>
<div class="t" style="left:1336px;width:100px;text-align:right;top:256.5px;font-size:18.7px;color:#5b5d68">63</div>
<svg style="left:1138px;top:248px" width="40" height="70" viewBox="0 0 40 70"><path d="M16.2 51.6H13.4A5.15 5.15 0 0 0 13.4 61.9H16.2M19.6 51.6H22.4A5.15 5.15 0 0 1 22.4 61.9H19.6" fill="none" stroke="#a3a5b1" stroke-width="2.4"/><path d="M15 56.8H21" stroke="#a3a5b1" stroke-width="2.6" stroke-linecap="round"/></svg>
<div class="t" style="left:1177.5px;top:298px;font-size:18.7px">Sitelinks</div>
<div class="t" style="left:1336px;width:100px;text-align:right;top:298px;font-size:18.7px;color:#5b5d68">2.7K</div>
<svg style="left:1145.8px;top:336.5px" width="20" height="20" viewBox="0 0 20 20"><circle cx="10.00" cy="4.40" r="4.7" fill="#a7a9b5"/><circle cx="15.60" cy="10.00" r="4.7" fill="#a7a9b5"/><circle cx="10.00" cy="15.60" r="4.7" fill="#a7a9b5"/><circle cx="4.40" cy="10.00" r="4.7" fill="#a7a9b5"/><path d="M10 3.5 Q11.0 9.0 16.5 10 Q11.0 11.0 10 16.5 Q9.0 11.0 3.5 10 Q9.0 9.0 10 3.5Z" fill="#f2f3f7"/></svg>
<div class="t" style="left:1177.5px;top:339.5px;font-size:18.7px">AI Overview</div>
<div class="t" style="left:1336px;width:100px;text-align:right;top:339.5px;font-size:18.7px;color:#5b5d68">1.6K</div>
<svg style="left:1146px;top:377.5px" width="20" height="20" viewBox="0 0 20 20"><circle cx="10" cy="10" r="8.8" fill="none" stroke="#a3a5b1" stroke-width="2.3"/><path d="M7.3 7.8a2.7 2.7 0 1 1 4 2.3c-.9.5-1.3.9-1.3 2" fill="none" stroke="#a3a5b1" stroke-width="2.3" stroke-linecap="round"/><circle cx="10" cy="15" r="1.3" fill="#a3a5b1"/></svg>
<div class="t" style="left:1177.5px;top:381px;font-size:18.7px">FAQ</div>
<div class="t" style="left:1336px;width:100px;text-align:right;top:381px;font-size:18.7px;color:#5b5d68">1</div>
<svg style="left:1145px;top:418.5px" width="22" height="21" viewBox="0 0 20 20"><path d="M10 0.8l2.8 6 6.5.7-4.9 4.4 1.4 6.5L10 15.1l-5.8 3.3 1.4-6.5L0.7 7.5l6.5-.7z" fill="#e0e1e7" stroke="#e0e1e7" stroke-width="0.8" stroke-linejoin="round"/></svg>
<div class="t" style="left:1177.5px;top:422.5px;font-size:18.7px;color:#c4c6ce">Reviews</div>
<div class="t" style="left:1336px;width:100px;text-align:right;top:422.5px;font-size:18.7px;color:#c4c6ce">0</div>
<svg style="left:1146px;top:462px" width="20" height="19" viewBox="0 0 20 19"><rect x="1.2" y="1.2" width="14" height="5.6" rx="1" fill="none" stroke="#e0e1e7" stroke-width="2.4"/><rect x="5.4" y="11.4" width="13.6" height="5.6" rx="1" fill="none" stroke="#e0e1e7" stroke-width="2.4"/></svg>
<div class="t" style="left:1177.5px;top:464px;font-size:18.7px;color:#c4c6ce">Indented</div>
<div class="t" style="left:1336px;width:100px;text-align:right;top:464px;font-size:18.7px;color:#c4c6ce">0</div>

</body></html>
